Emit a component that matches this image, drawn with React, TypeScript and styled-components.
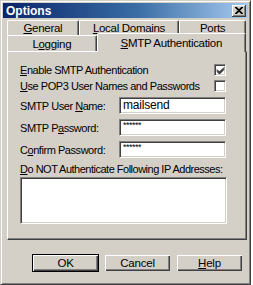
import React from 'react'
import styled, { createGlobalStyle } from 'styled-components'

const Global = createGlobalStyle`
  html, body {
    margin: 0;
    padding: 0;
    background: #ffffff;
  }
  body {
    font-family: "Liberation Sans", Arial, sans-serif;
    font-size: 11px;
    color: #000;
    white-space: nowrap;
  }
`

const App = () => {
  return (
    <>
      <Global />
      <Window>
        <TitleBar>
          <Title>Options</Title>
          <CloseBtn>
            <svg width="8" height="7" viewBox="0 0 8 7">
              <path d="M0 0 L7 7 M1 0 L8 7 M7 0 L0 7 M8 0 L1 7" stroke="#000" strokeWidth="1.2" />
            </svg>
          </CloseBtn>
        </TitleBar>
        <Body>
          <TabRow>
            <Tab w={72}><u>G</u>eneral</Tab>
            <Tab w={101}><u>L</u>ocal Domains</Tab>
            <Tab w={67}><u>P</u>orts</Tab>
          </TabRow>
          <TabRow>
            <Tab w={90}>L<u>o</u>gging</Tab>
            <Tab w={150} active><u>S</u>MTP Authentication</Tab>
          </TabRow>
          <Panel>
            <CheckRow>
              <Text><u>E</u>nable SMTP Authentication</Text>
              <Check>
                <svg width="9" height="9" viewBox="0 0 9 9">
                  <path d="M1 3.5 L3.5 6 L8 1.5 M1 4.5 L3.5 7 L8 2.5 M1 5.5 L3.5 8 L8 3.5" stroke="#000" strokeWidth="1" fill="none" />
                </svg>
              </Check>
            </CheckRow>
            <CheckRow>
              <Text><u>U</u>se POP3 User Names and Passwords</Text>
              <Check />
            </CheckRow>
            <FieldRow first>
              <Text>SMTP User <u>N</u>ame:</Text>
              <TextBox>mailsend</TextBox>
            </FieldRow>
            <FieldRow>
              <Text>SMTP P<u>a</u>ssword:</Text>
              <TextBox password>******</TextBox>
            </FieldRow>
            <FieldRow>
              <Text>C<u>o</u>nfirm Password:</Text>
              <TextBox password>******</TextBox>
            </FieldRow>
            <AreaLabel><u>D</u>o NOT Authenticate Following IP Addresses:</AreaLabel>
            <TextArea />
          </Panel>
          <Buttons>
            <Button primary>OK</Button>
            <Button>Cancel</Button>
            <Button><u>H</u>elp</Button>
          </Buttons>
        </Body>
      </Window>
    </>
  )
}

export default App

const Window = styled.div`
  width: 251px;
  height: 285px;
  box-sizing: border-box;
  background: #d4d0c8;
  border-top: 1px solid #d4d0c8;
  border-left: 1px solid #d4d0c8;
  border-right: 1px solid #404040;
  border-bottom: 1px solid #404040;
  box-shadow: inset 1px 1px 0 #ffffff, inset -1px -1px 0 #808080;
  padding: 2px;
  display: flex;
  flex-direction: column;
`
const TitleBar = styled.div`
  height: 15px;
  display: flex;
  align-items: center;
  justify-content: space-between;
  padding: 0 2px 0 3px;
  background: linear-gradient(90deg, #0a246a 0%, #3a6ea5 55%, #a6caf0 100%);
`
const Title = styled.div`
  color: #ffffff;
  font-weight: 700;
  font-size: 12px;
`
const CloseBtn = styled.div`
  width: 14px;
  height: 12px;
  background: #d4d0c8;
  display: flex;
  align-items: center;
  justify-content: center;
  box-sizing: border-box;
  border-right: 1px solid #404040;
  border-bottom: 1px solid #404040;
  box-shadow: inset 1px 1px 0 #ffffff, inset -1px -1px 0 #808080;
`
const Body = styled.div`
  display: flex;
  flex-direction: column;
  padding: 2px 2px 0 4px;
`
const Text = styled.span`
  font-size: 11px;
  letter-spacing: -0.45px;
`
const TabRow = styled.div`
  display: flex;
  height: 15px;
  & + & {
    height: 16px;
  }
`
const Tab = styled.div<{ w: number; active?: boolean }>`
  width: ${p => p.w}px;
  box-sizing: border-box;
  display: flex;
  align-items: center;
  justify-content: center;
  font-size: 11.5px;
  letter-spacing: -0.3px;
  border-top: 1px solid #ffffff;
  border-left: 1px solid #ffffff;
  border-right: 1px solid #404040;
  border-radius: 2px 2px 0 0;
  box-shadow: inset -1px 0 0 #808080;
  background: #d4d0c8;
  margin-top: ${p => (p.active ? '-2px' : '0')};
  position: relative;
  z-index: ${p => (p.active ? 1 : 0)};
  height: ${p => (p.active ? 'calc(100% + 3px)' : '100%')};
`
const Panel = styled.div`
  width: 240px;
  height: 189px;
  box-sizing: border-box;
  border-top: 1px solid #ffffff;
  border-left: 1px solid #ffffff;
  border-right: 1px solid #404040;
  border-bottom: 1px solid #404040;
  box-shadow: inset -1px -1px 0 #808080;
  padding: 10px 20px 0 12px;
  display: flex;
  flex-direction: column;
`
const CheckRow = styled.div`
  height: 16px;
  display: flex;
  align-items: center;
  justify-content: space-between;
`
const Check = styled.div`
  width: 12px;
  height: 12px;
  box-sizing: border-box;
  background: #ffffff;
  border-top: 1px solid #808080;
  border-left: 1px solid #808080;
  border-right: 1px solid #ffffff;
  border-bottom: 1px solid #ffffff;
  box-shadow: inset 1px 1px 0 #404040, inset -1px -1px 0 #d4d0c8;
  display: flex;
  align-items: center;
  justify-content: center;
`
const FieldRow = styled.div<{ first?: boolean }>`
  height: 17px;
  margin-top: ${p => (p.first ? '3px' : '5px')};
  display: flex;
  align-items: center;
  justify-content: space-between;
`
const TextBox = styled.div<{ password?: boolean }>`
  width: 107px;
  height: 17px;
  box-sizing: border-box;
  background: #ffffff;
  border-top: 1px solid #808080;
  border-left: 1px solid #808080;
  border-right: 1px solid #ffffff;
  border-bottom: 1px solid #ffffff;
  box-shadow: inset 1px 1px 0 #404040, inset -1px -1px 0 #d4d0c8;
  padding: 0 3px;
  display: flex;
  align-items: ${p => (p.password ? 'flex-start' : 'center')};
  font-size: ${p => (p.password ? '9px' : '12px')};
  line-height: ${p => (p.password ? '10px' : '15px')};
  letter-spacing: ${p => (p.password ? '-0.5px' : '-0.2px')};
`
const AreaLabel = styled.div`
  margin-top: 3px;
  height: 15px;
  display: flex;
  align-items: center;
  font-size: 11px;
  letter-spacing: -0.5px;
`
const TextArea = styled.div`
  margin-top: 1px;
  width: 207px;
  height: 47px;
  box-sizing: border-box;
  background: #ffffff;
  border-top: 1px solid #808080;
  border-left: 1px solid #808080;
  border-right: 1px solid #ffffff;
  border-bottom: 1px solid #ffffff;
  box-shadow: inset 1px 1px 0 #404040, inset -1px -1px 0 #d4d0c8;
`
const Buttons = styled.div`
  display: flex;
  justify-content: flex-end;
  gap: 5px;
  padding: 14px 3px 0 0;
`
const Button = styled.div<{ primary?: boolean }>`
  width: 67px;
  height: 18px;
  box-sizing: border-box;
  display: flex;
  align-items: center;
  justify-content: center;
  font-size: 11.5px;
  letter-spacing: -0.2px;
  background: #d4d0c8;
  border: 1px solid ${p => (p.primary ? '#000000' : 'transparent')};
  box-shadow: inset 1px 1px 0 #ffffff, inset -1px -1px 0 #404040, inset -2px -2px 0 #808080;
`
